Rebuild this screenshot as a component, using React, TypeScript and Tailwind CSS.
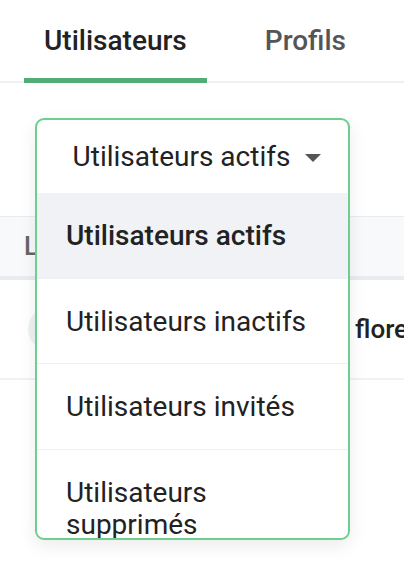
import { useState } from 'react';

const options = [
  'Utilisateurs actifs',
  'Utilisateurs inactifs',
  'Utilisateurs invités',
  'Utilisateurs supprimés',
];

const App = () => {
  const [tab] = useState('users');
  const [selected] = useState(options[0]);

  return (
    <div className="relative h-[582px] w-[404px] overflow-hidden bg-white font-['Roboto',sans-serif] text-[#222]">
      {/* tabs */}
      <div className="flex h-[83px] gap-[38px] border-b-2 border-[#eef2f5] pl-6">
        <div className={`-mb-[2px] flex items-center border-b-[5px] px-5 pt-1 text-[28px] font-medium ${tab === 'users' ? 'border-[#52ac78] text-[#222]' : 'border-transparent'}`}>
          Utilisateurs
        </div>
        <div className="-mb-[2px] flex items-center border-b-[5px] border-transparent px-5 pt-1 text-[28px] font-medium text-[#555]">
          Profils
        </div>
      </div>

      {/* table behind */}
      <div className="mt-[133px] flex h-[64px] items-center border-t border-b-[4px] border-[#e9ebef] bg-[#f8f9fb] pl-6 text-[26px] font-medium text-[#666]">
        L
      </div>
      <div className="flex h-[100px] items-center border-b-2 border-[#f0f2f5] pl-7">
        <div className="size-11 rounded-full bg-[#eef2f4]" />
        <div className="ml-auto w-[49px] text-[26px] font-medium whitespace-nowrap">flore</div>
      </div>

      {/* dropdown */}
      <div className="absolute left-[35px] top-[118px] flex h-[422px] w-[315px] flex-col overflow-hidden rounded-[9px] border-2 border-[#6ccf8e] bg-white shadow-[0_6px_18px_rgba(0,0,0,0.08)]">
        <div className="flex h-[73px] shrink-0 items-center justify-center gap-[15px] pl-[9px] text-[28px]">
          <span>{selected}</span>
          <svg width="16" height="8" viewBox="0 0 16 8" className="mt-0.5">
            <path d="M0 0h16L8 8z" fill="#555" />
          </svg>
        </div>
        {options.map((o) => (
          <div
            key={o}
            className={`flex shrink-0 items-center border-b-[1.5px] border-[#f0f1f4] px-[29px] pt-[27px] pb-[25.5px] text-[28px] leading-8 ${o === selected ? 'bg-[#f0f2f5] font-medium' : ''}`}
          >
            {o}
          </div>
        ))}
      </div>
    </div>
  );
};

export default App;
